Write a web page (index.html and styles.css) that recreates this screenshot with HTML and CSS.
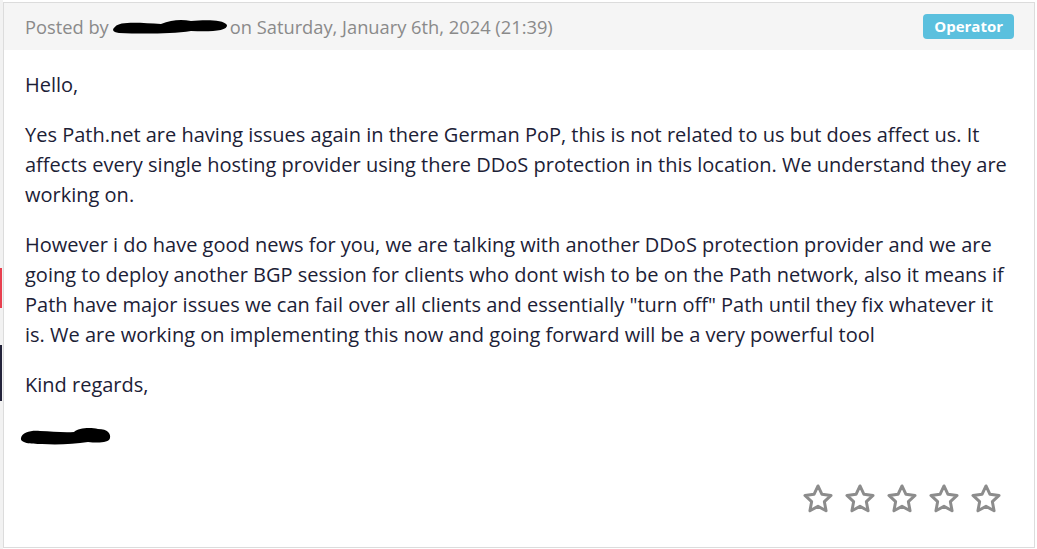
FILE: index.html
```html
<!DOCTYPE html>
<html lang="en">
<head>
    <meta charset="UTF-8">
    <meta name="viewport" content="width=device-width, initial-scale=1.0">
    <title>Ticket reply</title>
    <link rel="stylesheet" href="styles.css">
</head>
<body>
    <div class="page">
        <div class="side">
            <span class="side-red"></span>
            <span class="side-dark"></span>
        </div>
        <div class="reply">
            <div class="reply-head">
                <span class="posted">Posted by
                    <svg class="redact" width="118" height="18" viewBox="0 0 118 18">
                        <path d="M4 9 C8 3 30 5 50 6 C60 2 70 1 80 3 C92 2 112 1 116 7 C117 13 100 14 80 13 C60 16 30 16 8 15 C1 14 1 11 4 9 Z" fill="#000"/>
                    </svg>on Saturday, January 6th, 2024 (21:39)</span>
                <span class="badge">Operator</span>
            </div>
            <div class="reply-body">
                <p>Hello,</p>
                <p>Yes Path.net are having issues again in there German PoP, this is not related to us but does affect us. It affects every single hosting provider using there DDoS protection in this location. We understand they are working on.</p>
                <p>However i do have good news for you, we are talking with another DDoS protection provider and we are going to deploy another BGP session for clients who dont wish to be on the Path network, also it means if Path have major issues we can fail over all clients and essentially "turn off" Path until they fix whatever it is. We are working on implementing this now and going forward will be a very powerful tool</p>
                <p>Kind regards,</p>
                <svg class="signature" width="94" height="22" viewBox="0 0 94 22">
                    <path d="M3 13 C4 7 14 5 22 6 C34 6 44 8 56 7 C60 3 72 2 80 4 C90 4 93 9 92 13 C91 18 80 18 70 17 C56 19 40 20 24 19 C12 19 2 18 3 13 Z" fill="#000"/>
                </svg>
            </div>
            <div class="rating">
                <svg viewBox="0 0 24 24"><path d="M12 2.8l2.8 5.9 6.4.8-4.7 4.4 1.2 6.4L12 17.2l-5.7 3.1 1.2-6.4-4.7-4.4 6.4-.8z"/></svg>
                <svg viewBox="0 0 24 24"><path d="M12 2.8l2.8 5.9 6.4.8-4.7 4.4 1.2 6.4L12 17.2l-5.7 3.1 1.2-6.4-4.7-4.4 6.4-.8z"/></svg>
                <svg viewBox="0 0 24 24"><path d="M12 2.8l2.8 5.9 6.4.8-4.7 4.4 1.2 6.4L12 17.2l-5.7 3.1 1.2-6.4-4.7-4.4 6.4-.8z"/></svg>
                <svg viewBox="0 0 24 24"><path d="M12 2.8l2.8 5.9 6.4.8-4.7 4.4 1.2 6.4L12 17.2l-5.7 3.1 1.2-6.4-4.7-4.4 6.4-.8z"/></svg>
                <svg viewBox="0 0 24 24"><path d="M12 2.8l2.8 5.9 6.4.8-4.7 4.4 1.2 6.4L12 17.2l-5.7 3.1 1.2-6.4-4.7-4.4 6.4-.8z"/></svg>
            </div>
        </div>
    </div>
</body>
</html>
```
FILE: styles.css
```css
body {
    margin: 0;
    background: #fff;
    font-family: "Open Sans", sans-serif;
}
.page {
    display: flex;
    height: 549px;
    padding-top: 2px;
    box-sizing: border-box;
}
.side {
    width: 3px;
    background: #f2f2f2;
    display: flex;
    flex-direction: column;
    margin-top: -2px;
}
.side span {
    display: block;
    width: 2px;
}
.side-red {
    background: #e8404f;
    height: 40px;
    margin-top: 268px;
}
.side-dark {
    background: #23233a;
    height: 56px;
    margin-top: 37px;
}
.reply {
    width: 1032px;
    height: 546px;
    box-sizing: border-box;
    border: 1px solid #dcdcdc;
    display: flex;
    flex-direction: column;
}
.reply-head {
    height: 47px;
    background: #f5f5f5;
    display: flex;
    align-items: center;
    justify-content: space-between;
    padding: 0 20px 0 21px;
}
.posted {
    color: #8a8a8a;
    font-size: 18.3px;
    display: flex;
    align-items: center;
    gap: 4px;
    white-space: nowrap;
}
.redact {
    display: block;
    margin-left: -2px;
    margin-right: -3px;
}
.badge {
    background: #5bc0de;
    color: #fff;
    font-weight: bold;
    font-size: 15px;
    padding: 2px 11px 3px;
    border-radius: 4px;
}
.reply-body {
    padding: 20px 21px 0 21px;
    color: #1c2136;
    font-size: 20px;
    line-height: 30px;
}
.reply-body p {
    margin: 0 0 20px 0;
}
.signature {
    display: block;
    margin-top: 25px;
    margin-left: -7px;
}
.rating {
    margin-top: auto;
    display: flex;
    justify-content: flex-end;
    gap: 8px;
    padding: 0 31px 31px 0;
}
.rating svg {
    width: 34px;
    height: 34px;
    fill: none;
    stroke: #8c8c8c;
    stroke-width: 2.1;
    stroke-linejoin: round;
}
```
